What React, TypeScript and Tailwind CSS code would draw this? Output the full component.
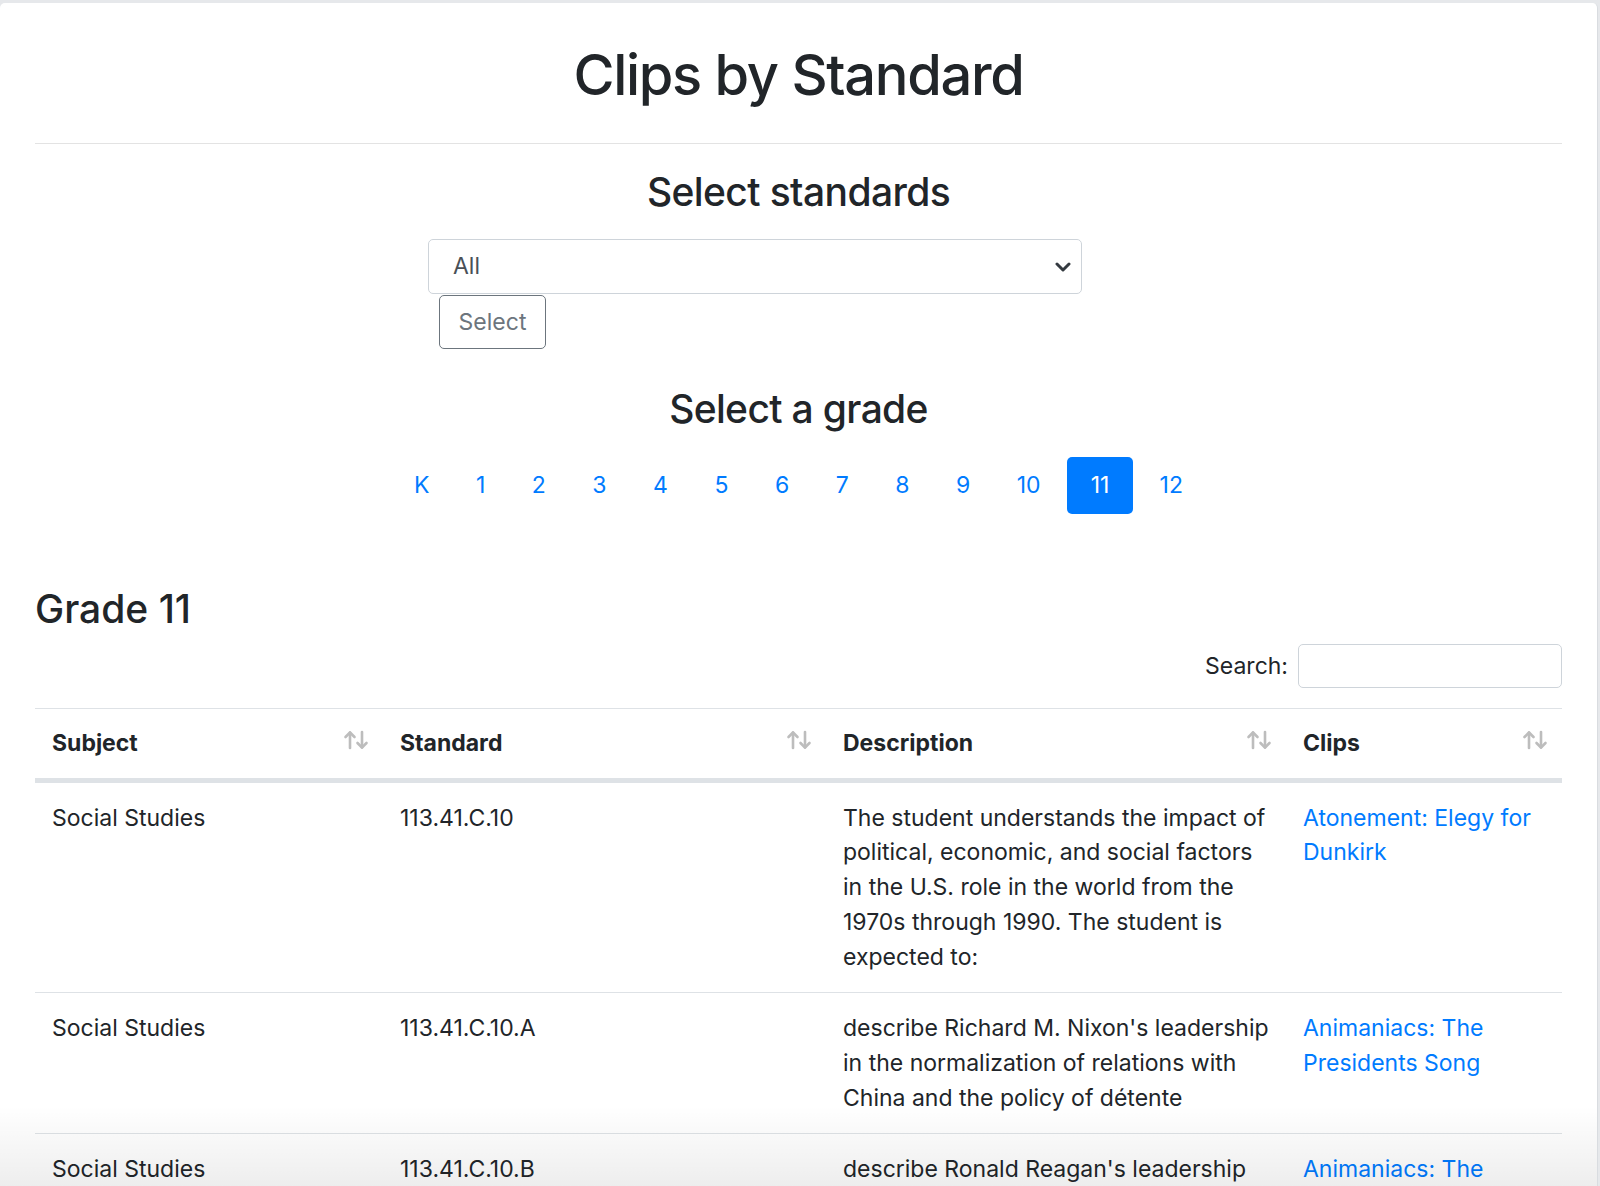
import React, { useState } from 'react';

const grades = ['K', '1', '2', '3', '4', '5', '6', '7', '8', '9', '10', '11', '12'];

const rows = [
  {
    subject: 'Social Studies',
    standard: '113.41.C.10',
    description:
      'The student understands the impact of political, economic, and social factors in the U.S. role in the world from the 1970s through 1990. The student is expected to:',
    clip: 'Atonement: Elegy for Dunkirk',
  },
  {
    subject: 'Social Studies',
    standard: '113.41.C.10.A',
    description:
      "describe Richard M. Nixon's leadership in the normalization of relations with China and the policy of détente",
    clip: 'Animaniacs: The Presidents Song',
  },
  {
    subject: 'Social Studies',
    standard: '113.41.C.10.B',
    description:
      "describe Ronald Reagan's leadership in domestic and international policies, including Reaganomics and Peace Through Strength",
    clip: 'Animaniacs: The Presidents Song',
  },
];

function SortIcon() {
  return (
    <svg width="26" height="20" viewBox="0 0 26 20" fill="none" stroke="#bdbdbd" strokeWidth="2.6" strokeLinecap="round" strokeLinejoin="round">
      <path d="M7 18V2.5" />
      <path d="M2.5 7L7 2.5 11.5 7" />
      <path d="M19 2v15.5" />
      <path d="M14.5 13L19 17.5 23.5 13" />
    </svg>
  );
}

function Chevron() {
  return (
    <svg width="16" height="10" viewBox="0 0 16 10" fill="none" stroke="#343a40" strokeWidth="3" strokeLinecap="round" strokeLinejoin="round">
      <path d="M2 2l6 6 6-6" />
    </svg>
  );
}

function HeaderCell({ label }: { label: string }) {
  return (
    <th className="p-[17px] pr-[14px] text-left font-bold align-middle">
      <div className="flex items-center justify-between">
        <span>{label}</span>
        <span className="-mt-[6px]">
          <SortIcon />
        </span>
      </div>
    </th>
  );
}

export default function App() {
  const [grade, setGrade] = useState('11');
  const [search, setSearch] = useState('');

  return (
    <div className="h-screen overflow-hidden bg-[#e6e8eb] pt-[3px] pr-[2px] font-['Inter',sans-serif] text-[23px] leading-[34.7px] text-[#212529]">
      <div className="relative h-full overflow-hidden rounded-t-[5px] border-r border-[#d9dce0] bg-white">
        <div className="px-[35px]">
          <h1 className="pt-[38px] text-center text-[56px] leading-[69px] font-medium tracking-[-1.3px]">Clips by Standard</h1>
          <hr className="mt-[33px] border-0 border-t border-[#e3e3e3]" />

          <h3 className="mt-[24px] text-center text-[39px] leading-[48px] font-medium tracking-[-0.6px]">Select standards</h3>
          <div className="mx-auto mt-[23px] w-[741px]">
            <div className="flex h-[55px] w-[654px] items-center justify-between rounded-[5px] border border-[#ced4da] pl-[24px] pr-[10px] text-[#495057]">
              <span>All</span>
              <Chevron />
            </div>
            <button className="ml-[11px] mt-px h-[54px] w-[107px] rounded-[5px] border border-[#6c757d] text-[#6c757d]">
              Select
            </button>
          </div>

          <h3 className="mt-[36px] text-center text-[39px] leading-[48px] font-medium tracking-[-0.65px]">Select a grade</h3>
          <div className="mt-[24px] flex justify-center gap-[6.5px]">
            {grades.map((g) => (
              <button
                key={g}
                onClick={() => setGrade(g)}
                className={
                  g === grade
                    ? 'h-[57px] min-w-[66px] rounded-[5px] bg-[#007bff] px-[20px] text-white'
                    : 'h-[57px] rounded-[5px] px-[20px] text-[#007bff]'
                }
              >
                {g}
              </button>
            ))}
          </div>

          <h3 className="mt-[71px] text-[39px] leading-[48px] font-medium">Grade {grade}</h3>
          <div className="mt-[11px] flex items-center justify-end gap-[10px]">
            <label>Search:</label>
            <input
              value={search}
              onChange={(e) => setSearch(e.target.value)}
              className="h-[44px] w-[264px] rounded-[5px] border border-[#ced4da] px-3 outline-none"
            />
          </div>

          <table className="mt-[20px] w-full table-fixed border-collapse">
            <colgroup>
              <col className="w-[348px]" />
              <col className="w-[443px]" />
              <col className="w-[460px]" />
              <col className="w-[276px]" />
            </colgroup>
            <thead>
              <tr className="border-t border-b-[5px] border-[#dee2e6]">
                <HeaderCell label="Subject" />
                <HeaderCell label="Standard" />
                <HeaderCell label="Description" />
                <HeaderCell label="Clips" />
              </tr>
            </thead>
            <tbody>
              {rows
                .filter((r) => (r.subject + r.standard + r.description + r.clip).toLowerCase().includes(search.toLowerCase()))
                .map((r) => (
                  <tr key={r.standard} className="border-b border-[#dee2e6]">
                    <td className="px-[17px] py-[18px] align-top">{r.subject}</td>
                    <td className="px-[17px] py-[18px] align-top">{r.standard}</td>
                    <td className="px-[17px] py-[18px] align-top">{r.description}</td>
                    <td className="px-[17px] py-[18px] align-top">
                      <a href="#" className="text-[#007bff]">{r.clip}</a>
                    </td>
                  </tr>
                ))}
            </tbody>
          </table>
        </div>
        <div className="pointer-events-none absolute inset-x-0 bottom-0 h-[80px] bg-linear-to-b from-transparent to-black/[0.07]" />
      </div>
    </div>
  );
}
